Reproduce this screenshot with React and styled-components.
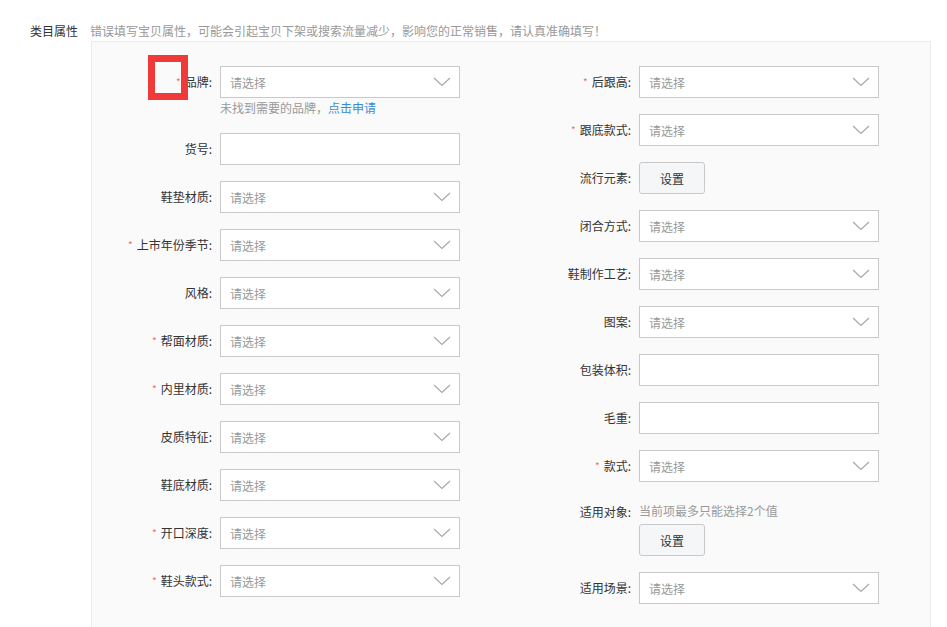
import React from "react";
import styled, { createGlobalStyle } from "styled-components";

const GlobalStyle = createGlobalStyle`
  body {
    margin: 0;
    background: #fff;
    font-family: "Noto Sans CJK SC", "Noto Sans", sans-serif;
    font-size: 12px;
    color: #333;
    overflow: hidden;
  }
`;

const leftFields = [
  { label: "品牌", required: true, type: "select", hint: true },
  { label: "货号", type: "input" },
  { label: "鞋垫材质", type: "select" },
  { label: "上市年份季节", required: true, type: "select" },
  { label: "风格", type: "select" },
  { label: "帮面材质", required: true, type: "select" },
  { label: "内里材质", required: true, type: "select" },
  { label: "皮质特征", type: "select" },
  { label: "鞋底材质", type: "select" },
  { label: "开口深度", required: true, type: "select" },
  { label: "鞋头款式", required: true, type: "select" },
];

const rightFields = [
  { label: "后跟高", required: true, type: "select" },
  { label: "跟底款式", required: true, type: "select" },
  { label: "流行元素", type: "button" },
  { label: "闭合方式", type: "select" },
  { label: "鞋制作工艺", type: "select" },
  { label: "图案", type: "select" },
  { label: "包装体积", type: "input" },
  { label: "毛重", type: "input" },
  { label: "款式", required: true, type: "select" },
  { label: "适用对象", type: "button", limit: "当前项最多只能选择2个值" },
  { label: "适用场景", type: "select" },
];

const Chevron = () => (
  <svg width="18" height="10" viewBox="0 0 18 10">
    <polyline
      points="1,1 9,8.5 17,1"
      fill="none"
      stroke="#a8a8a8"
      strokeWidth="1.2"
    />
  </svg>
);

const Field = ({ label, required, type, hint, limit }) => (
  <FieldRow>
    <Label tall={!!limit}>
      {required && <Star>*</Star>}
      {label}:
    </Label>
    <Control>
      {limit && <Limit>{limit}</Limit>}
      {type === "select" && (
        <Select>
          <span>请选择</span>
          <Chevron />
        </Select>
      )}
      {type === "input" && <TextBox />}
      {type === "button" && <SetButton>设置</SetButton>}
      {hint && (
        <Hint>
          未找到需要的品牌，<Link>点击申请</Link>
        </Hint>
      )}
    </Control>
  </FieldRow>
);

const App = () => {
  return (
    <>
      <GlobalStyle />
      <Page>
        <SectionLabel>类目属性</SectionLabel>
        <SectionBody>
          <Notice>
            错误填写宝贝属性，可能会引起宝贝下架或搜索流量减少，影响您的正常销售，请认真准确填写！
          </Notice>
          <Panel>
            <Column>
              {leftFields.map((f) => (
                <Field key={f.label} {...f} />
              ))}
            </Column>
            <Column>
              {rightFields.map((f) => (
                <Field key={f.label} {...f} />
              ))}
            </Column>
            <Marker />
          </Panel>
        </SectionBody>
      </Page>
    </>
  );
};

const Page = styled.div`
  display: flex;
  padding-top: 21px;
`;

const SectionLabel = styled.div`
  width: 78px;
  padding-right: 12px;
  text-align: right;
  line-height: 20px;
  color: #333;
  flex-shrink: 0;
`;

const SectionBody = styled.div`
  flex: 1;
  padding-right: 16px;
`;

const Notice = styled.div`
  height: 20px;
  line-height: 20px;
  color: #999;
`;

const Panel = styled.div`
  position: relative;
  display: grid;
  grid-template-columns: 419px 1fr;
  margin-left: 1px;
  padding: 24px 0 30px;
  background: #fafafa;
  border: 1px solid #ececec;
  border-bottom: none;
`;

const Column = styled.div`
  display: flex;
  flex-direction: column;
  gap: 16px;
`;

const FieldRow = styled.div`
  display: flex;
  align-items: flex-start;
`;

const Label = styled.div`
  width: 120px;
  padding-right: 8px;
  flex-shrink: 0;
  text-align: right;
  line-height: ${(props) => (props.tall ? "28px" : "32px")};
  color: #333;
  white-space: nowrap;
`;

const Star = styled.span`
  color: #f46b6b;
  font-size: 10px;
  margin-right: 4px;
  vertical-align: 1px;
`;

const Control = styled.div`
  display: flex;
  flex-direction: column;
  align-items: flex-start;
`;

const Select = styled.div`
  box-sizing: border-box;
  width: 240px;
  height: 32px;
  padding: 0 8px 0 9px;
  display: flex;
  align-items: center;
  justify-content: space-between;
  background: #fff;
  border: 1px solid #c9c9c9;
  color: #999;
`;

const TextBox = styled.div`
  box-sizing: border-box;
  width: 240px;
  height: 32px;
  background: #fff;
  border: 1px solid #c9c9c9;
`;

const SetButton = styled.div`
  box-sizing: border-box;
  width: 66px;
  height: 32px;
  display: flex;
  align-items: center;
  justify-content: center;
  background: #f5f6f8;
  border: 1px solid #c9c9c9;
  border-radius: 3px;
  color: #333;
`;

const Hint = styled.div`
  line-height: 19px;
  color: #999;
`;

const Limit = styled.div`
  line-height: 26px;
  color: #999;
`;

const Link = styled.span`
  color: #3a8bd6;
`;

const Marker = styled.div`
  position: absolute;
  left: 56px;
  top: 13px;
  width: 40px;
  height: 45px;
  box-sizing: border-box;
  border: 7px solid #f03a3a;
`;

export default App;
